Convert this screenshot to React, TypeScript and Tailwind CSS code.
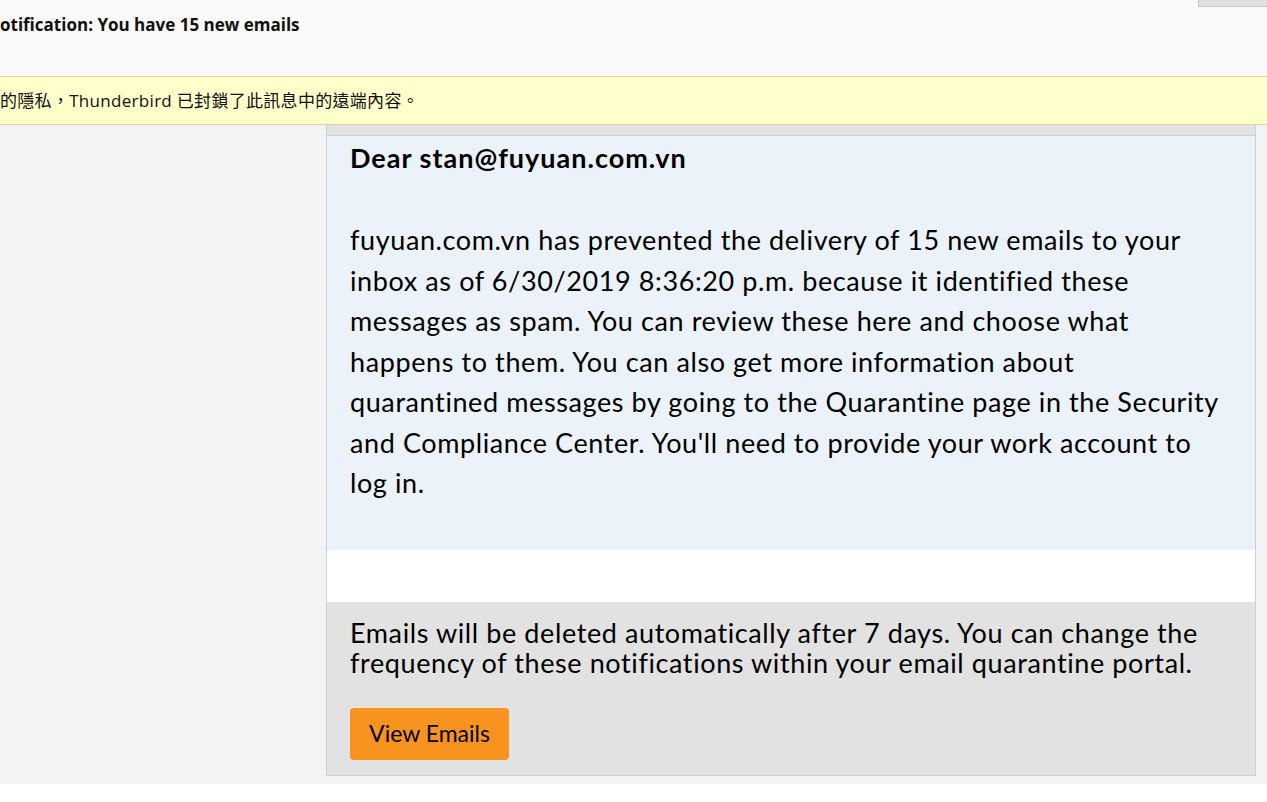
export default function App() {
  return (
    <div className="w-[1267px] h-[802px] bg-white overflow-hidden font-['Lato','Noto_Sans_CJK_TC',sans-serif] text-black">
      {/* Message header */}
      <div className="relative h-[76px] bg-[#f9f9f9]">
        <div className="absolute right-0 top-0 h-[7px] w-[69px] bg-[#e0e0e0] border-l border-b border-[#c8c8c8]" />
        <div className="pt-[13px] text-[17px] font-bold leading-[24px] text-[#111] font-['Open_Sans',sans-serif]">
          otification: You have 15 new emails
        </div>
      </div>

      {/* Remote content bar */}
      <div className="h-[49px] bg-[#ffffcc] border-t border-[#aab9d3] border-b border-[#d6d6a8] flex items-center">
        <span className="text-[17px] tracking-[0.3px] text-[#111] font-['Open_Sans','Noto_Sans_CJK_TC',sans-serif]">
          的隱私，Thunderbird 已封鎖了此訊息中的遠端內容。
        </span>
      </div>

      {/* Message body */}
      <div className="bg-[#f3f3f3] pl-[326px] pr-[11px] pb-[8px]">
        <div className="border-x border-b border-[#cfcfcf]">
          <div className="h-[11px] bg-[#e2e2e2] border-b border-[#cfcfcf]" />

          <div className="bg-[#ebf2f9] pl-[23px] pr-[20px] pt-[6px] pb-[46px]">
            <h1 className="text-[27px] font-bold leading-[32px] tracking-[1px]">Dear stan@fuyuan.com.vn</h1>
            <p className="mt-[46px] text-[27px] leading-[40.5px] tracking-[0.6px] whitespace-nowrap">
              fuyuan.com.vn has prevented the delivery of 15 new emails to your
              <br />
              inbox as of 6/30/2019 8:36:20 p.m. because it identified these
              <br />
              messages as spam. You can review these here and choose what
              <br />
              happens to them. You can also get more information about
              <br />
              quarantined messages by going to the Quarantine page in the Security
              <br />
              and Compliance Center. You'll need to provide your work account to
              <br />
              log in.
            </p>
          </div>

          <div className="h-[52px] bg-white" />

          <div className="bg-[#e2e2e2] pl-[23px] pt-[16px] pb-[15px]">
            <p className="text-[27px] leading-[30px] tracking-[0.6px] whitespace-nowrap">
              Emails will be deleted automatically after 7 days. You can change the
              <br />
              frequency of these notifications within your email quarantine portal.
            </p>
            <button className="mt-[30px] h-[52px] w-[159px] rounded-[4px] bg-[#f7931e] text-[23px] text-black">
              View Emails
            </button>
          </div>
        </div>
      </div>
    </div>
  );
}
